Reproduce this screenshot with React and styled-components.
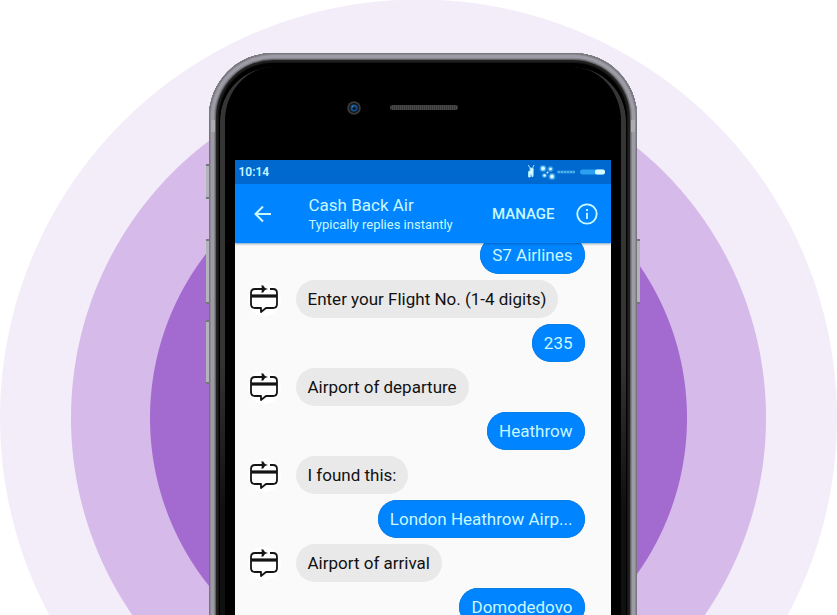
import React from "react";
import styled, { createGlobalStyle } from "styled-components";

const GlobalStyle = createGlobalStyle`
  *, *::before, *::after { box-sizing: border-box; }
  body { margin: 0; background: #fff; font-family: Roboto, "Liberation Sans", sans-serif; }
  button { font: inherit; color: inherit; background: none; border: 0; padding: 0; cursor: pointer; }
`;

const Hero = styled.main`
  display: flex;
  justify-content: center;
  height: 100vh;
  padding: 53px 0 0 8px;
  overflow: hidden;
  background: radial-gradient(
    circle at 50% 418px,
    #a36ad0 268px, #d6bae9 269px,
    #d6bae9 347px, #f3edf9 348px,
    #f3edf9 418px, #fff 419px
  );
`;

const Phone = styled.div`
  position: relative;
  display: flex;
  flex-direction: column;
  flex: 0 1 428px;
  min-width: 0;
  height: 860px;
  padding: 7px 26px 0;
  border-radius: 64px;
  background: #000;
  box-shadow:
    inset 0 0 0 1px #77767c,
    inset 0 0 0 2px #8b8a92,
    inset 0 0 0 5px #9d9ca6,
    inset 0 0 0 6px #85848c,
    inset 0 0 0 7px #626166,
    inset 0 0 0 9px #20211f,
    inset 0 0 0 10px #131312;

  &::before {
    content: "";
    position: absolute;
    inset: 14px 11px 0;
    border: solid #353535;
    border-width: 0 5px;
    border-radius: 54px 54px 0 0;
    mask-image: linear-gradient(#000 290px, rgba(0, 0, 0, 0.3) 440px);
    pointer-events: none;
  }
`;

const SideKey = styled.span`
  position: absolute;
  top: ${(p) => p.$top}px;
  ${(p) => p.$side}: -3px;
  width: 3px;
  height: ${(p) => p.$length}px;
  background: #b1b4b8;
  border: solid #77777d;
  border-width: 2px 0;
`;

const AntennaBand = styled.span`
  position: absolute;
  top: 67px;
  ${(p) => p.$side}: 2px;
  width: 4px;
  height: 12px;
  background: #acadb3;
`;

const Forehead = styled.div`
  display: grid;
  grid-template-columns: 1fr auto 1fr;
  align-items: center;
  column-gap: 29px;
  flex: none;
  height: 100px;
  padding: 0 0 5px 2px;
`;

const Camera = styled.svg`
  justify-self: end;
  width: 14px;
  height: 14px;
`;

const Speaker = styled.span`
  width: 68px;
  height: 5px;
  border-radius: 3px;
  background: repeating-linear-gradient(90deg, #484848 0 1px, #363636 1px 2px);
`;

const Screen = styled.section`
  display: flex;
  flex-direction: column;
  flex: 1;
  min-height: 0;
  overflow: hidden;
  background: #fafafa;
`;

const StatusBar = styled.div`
  display: flex;
  align-items: center;
  justify-content: space-between;
  flex: none;
  height: 24px;
  padding: 0 4px;
  background: #0069d0;
  color: #c4f6ff;
  font-size: 12px;
  line-height: 16px;
  font-weight: 600;
`;

const StatusIcons = styled.svg`
  width: 80px;
  height: 16px;
`;

const Header = styled.header`
  position: relative;
  z-index: 1;
  display: flex;
  align-items: center;
  flex: none;
  height: 59px;
  padding: 0 12px 0 16px;
  background: #0084ff;
  color: #c9f8ff;
  box-shadow: 0 1px 2px rgba(0, 70, 130, 0.5);
`;

const IconButton = styled.button`
  display: grid;
  place-items: center;
  flex: none;
  width: 24px;
  height: 24px;
`;

const Contact = styled.div`
  flex: 1;
  min-width: 0;
  margin-left: 34px;
`;

const ContactName = styled.h1`
  margin: 0;
  font-size: 17px;
  line-height: 22px;
  font-weight: 400;
`;

const ContactNote = styled.p`
  margin: 0;
  font-size: 13px;
  line-height: 18px;
  white-space: nowrap;
`;

const ManageButton = styled.button`
  margin-right: 20px;
  font-size: 15px;
  line-height: 20px;
  font-weight: 500;
`;

const Thread = styled.ol`
  display: flex;
  flex-direction: column;
  gap: 6px;
  margin: -7px 0 0;
  padding: 0 26px 0 13px;
  list-style: none;
`;

const Message = styled.li`
  display: flex;
  align-items: center;
  justify-content: ${(p) => (p.$sent ? "flex-end" : "flex-start")};
  gap: 15px;
`;

const Avatar = styled.span`
  display: grid;
  place-items: center;
  flex: none;
  width: 33px;
  height: 33px;
  border-radius: 50%;
  background: #fff;
`;

const Bubble = styled.p`
  margin: 0;
  padding: 8px 12px;
  border-radius: 19px;
  font-size: 17px;
  line-height: 22px;
  white-space: nowrap;
  overflow: hidden;
  text-overflow: ellipsis;
  color: ${(p) => (p.$sent ? "#c9f8ff" : "#111")};
  background: ${(p) => (p.$sent ? "#0084ff" : "#e9e9e9")};
  box-shadow: ${(p) => (p.$sent ? "inset 0 0 0 1px #0a7fe8" : "none")};
`;

const CardIcon = () => (
  <svg width="30" height="30" viewBox="0 0 30 30" fill="none" stroke="#141414" strokeWidth="1.8" aria-hidden="true">
    <path d="M15 5H6Q2 5 2 9V20Q2 24 6 24H12V28L17 24H24Q28 24 28 20V9Q28 5 24 5H21" strokeLinejoin="round" />
    <path d="M2 12H28" strokeWidth="3.2" />
    <path d="M12.4 1.2L14.2 1.6L16 3.9L19 5L16 6.1L14.2 8.4L12.4 8.8L13 5Z" fill="#141414" stroke="none" />
  </svg>
);

const BackIcon = () => (
  <svg width="22" height="22" viewBox="0 0 22 22" fill="none" stroke="currentColor" strokeWidth="2" aria-hidden="true">
    <path d="M19 11H4M11 3.5L3.5 11L11 18.5" />
  </svg>
);

const InfoIcon = () => (
  <svg width="22" height="22" viewBox="0 0 22 22" fill="none" stroke="currentColor" strokeWidth="1.8" aria-hidden="true">
    <circle cx="11" cy="11" r="9.7" />
    <path d="M11 9.8V16M11 6V8" />
  </svg>
);

const messages = [
  { sent: true, text: "S7 Airlines" },
  { sent: false, text: "Enter your Flight No. (1-4 digits)" },
  { sent: true, text: "235" },
  { sent: false, text: "Airport of departure" },
  { sent: true, text: "Heathrow" },
  { sent: false, text: "I found this:" },
  { sent: true, text: "London Heathrow Airp..." },
  { sent: false, text: "Airport of arrival" },
  { sent: true, text: "Domodedovo" },
];

export default function App() {
  return (
    <>
      <GlobalStyle />
      <Hero>
        <Phone>
          <SideKey $side="left" $top={111} $length={35} />
          <SideKey $side="left" $top={186} $length={65} />
          <SideKey $side="left" $top={267} $length={64} />
          <SideKey $side="right" $top={186} $length={65} />
          <AntennaBand $side="left" />
          <AntennaBand $side="right" />
          <Forehead>
            <Camera viewBox="0 0 14 14" aria-hidden="true">
              <circle cx="7" cy="7" r="6.8" fill="#3b3a39" />
              <circle cx="7" cy="7" r="5" fill="#11151c" />
              <circle cx="7" cy="7" r="3.6" fill="#17508c" />
              <circle cx="7.2" cy="7.4" r="1.7" fill="#081423" />
              <circle cx="5.6" cy="5.4" r="0.9" fill="#3d7cb5" />
            </Camera>
            <Speaker />
          </Forehead>
          <Screen>
            <StatusBar>
              <time>10:14</time>
              <StatusIcons viewBox="0 0 80 16" aria-hidden="true">
                <path d="M1.2 1L3.2 4M7 1L5.6 4M3 4L6.2 4.6L6 12.5H4.8V10.4H3.2V13H1.6V7.6L3.4 6.6Z" fill="#d8fbff" stroke="#b5efff" strokeWidth="0.9" />
                <g fill="#46a9ee" stroke="#2a90dd">
                  <rect x="13" y="1.5" width="6" height="6" rx="2" />
                  <rect x="21" y="2.5" width="5" height="5" rx="2" />
                  <rect x="15" y="9.5" width="5" height="4" rx="2" />
                  <rect x="22" y="9.5" width="6" height="6" rx="2" />
                </g>
                <g fill="#d8fbff">
                  <circle cx="16" cy="4.5" r="2" />
                  <circle cx="23.5" cy="5" r="1.3" />
                  <circle cx="17.5" cy="11.5" r="1.2" />
                  <circle cx="25" cy="12.5" r="2" />
                  <circle cx="20.5" cy="8.5" r="1" />
                </g>
                <path d="M30 8H48" stroke="#2a90dd" strokeWidth="3" />
                <path d="M31 8H48" stroke="#49b3ee" strokeWidth="2" strokeDasharray="2 1" />
                <rect x="53" y="5.5" width="24" height="5" rx="2.5" fill="#29a1ee" />
                <rect x="68" y="5.5" width="10" height="5" rx="2" fill="#d8fbff" />
              </StatusIcons>
            </StatusBar>
            <Header>
              <IconButton type="button" aria-label="Back"><BackIcon /></IconButton>
              <Contact>
                <ContactName>Cash Back Air</ContactName>
                <ContactNote>Typically replies instantly</ContactNote>
              </Contact>
              <ManageButton type="button">MANAGE</ManageButton>
              <IconButton type="button" aria-label="Information"><InfoIcon /></IconButton>
            </Header>
            <Thread>
              {messages.map(({ sent, text }) => (
                <Message key={text} $sent={sent}>
                  {!sent && <Avatar><CardIcon /></Avatar>}
                  <Bubble $sent={sent}>{text}</Bubble>
                </Message>
              ))}
            </Thread>
          </Screen>
        </Phone>
      </Hero>
    </>
  );
}
